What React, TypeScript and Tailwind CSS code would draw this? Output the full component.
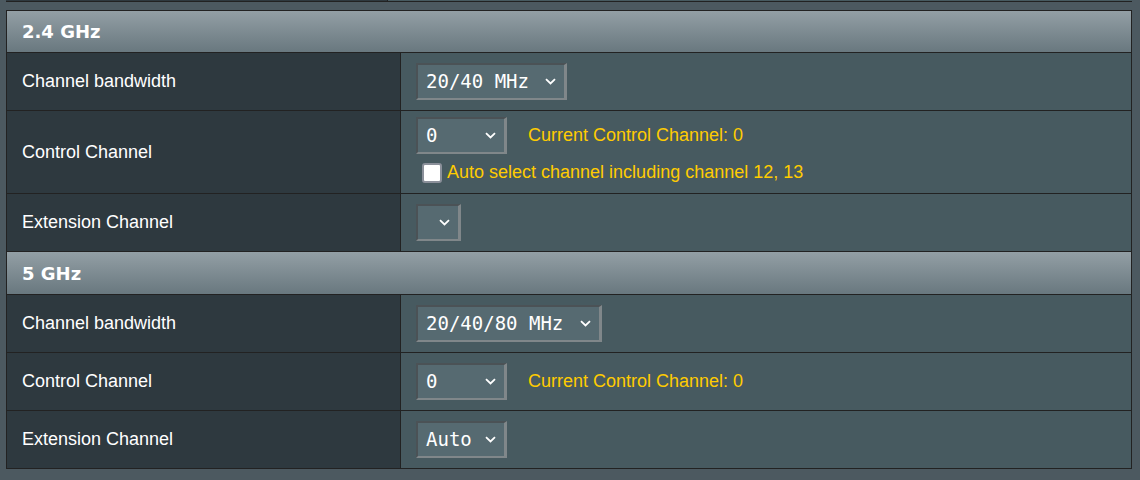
import React from "react";

const sans = { fontFamily: '"Liberation Sans", Arial, sans-serif' };
const mono = { fontFamily: '"DejaVu Sans Mono", "Liberation Mono", monospace' };
const head = { fontFamily: '"DejaVu Sans", Verdana, sans-serif' };

function Chevron() {
  return (
    <svg width="11" height="7" viewBox="0 0 11 7" className="shrink-0">
      <path d="M1 1.2 L5.5 5.5 L10 1.2" fill="none" stroke="#ffffff" strokeWidth="1.8" />
    </svg>
  );
}

function Select({ value, width }: { value: string; width: number }) {
  return (
    <div
      className="flex h-[37px] items-center justify-between bg-[#566a71] border-l-2 border-t-2 border-r-[3px] border-b-2 border-l-[#4b5256] border-t-[#4b5256] border-r-[#80878a] border-b-[#80878a] pl-[8px] pr-[8px] text-[19px] text-white"
      style={{ ...mono, width }}
    >
      <span className="leading-none">{value}</span>
      <Chevron />
    </div>
  );
}

function Header({ title, h }: { title: string; h: string }) {
  return (
    <div
      className={`${h} flex items-center border-b border-[#222] bg-gradient-to-b from-[#939fa5] to-[#69787f] pl-[15px] text-[18px] font-bold text-white`}
      style={head}
    >
      {title}
    </div>
  );
}

function Row({
  label,
  h,
  children,
}: {
  label: string;
  h: string;
  children: React.ReactNode;
}) {
  return (
    <div className={`${h} flex border-b border-[#222]`}>
      <div
        className="flex w-[394px] shrink-0 items-center border-r border-[#222] bg-[#2e393f] pl-[15px] text-[18px] text-white"
        style={sans}
      >
        {label}
      </div>
      <div className="flex flex-1 bg-[#475a60] pl-[15px]">{children}</div>
    </div>
  );
}

function CurrentChannel() {
  return (
    <span className="ml-[21px] text-[18px] text-[#ffcc00]" style={sans}>
      Current Control Channel: 0
    </span>
  );
}

export default function App() {
  return (
    <div className="min-h-[480px] w-full bg-[#4c5960]">
      {/* tail of the table above */}
      <div className="ml-[6px] flex h-[2px] w-[1126px] border-b border-[#222]">
        <div className="w-[382px] border-r border-[#222] bg-[#2f393f]" />
        <div className="flex-1 bg-[#475a60]" />
      </div>

      <div className="ml-[6px] mt-[8px] w-[1126px] border-x border-t border-[#222]">
        <Header title="2.4 GHz" h="h-[42px]" />
        <Row label="Channel bandwidth" h="h-[58px]">
          <div className="flex items-center">
            <Select value="20/40 MHz" width={151} />
          </div>
        </Row>
        <Row label="Control Channel" h="h-[83px]">
          <div className="flex flex-col pt-[6px]">
            <div className="flex items-center">
              <Select value="0" width={91} />
              <CurrentChannel />
            </div>
            <label className="ml-[6px] mt-[5px] flex items-center" style={sans}>
              <span className="h-[20px] w-[20px] rounded-[3px] border-2 border-[#8b909a] bg-white" />
              <span className="ml-[5px] text-[18px] text-[#ffcc00]">
                Auto select channel including channel 12, 13
              </span>
            </label>
          </div>
        </Row>
        <Row label="Extension Channel" h="h-[58px]">
          <div className="flex items-center">
            <Select value="" width={45} />
          </div>
        </Row>

        <Header title="5 GHz" h="h-[43px]" />
        <Row label="Channel bandwidth" h="h-[58px]">
          <div className="flex items-center">
            <Select value="20/40/80 MHz" width={186} />
          </div>
        </Row>
        <Row label="Control Channel" h="h-[58px]">
          <div className="flex items-center">
            <Select value="0" width={91} />
            <CurrentChannel />
          </div>
        </Row>
        <Row label="Extension Channel" h="h-[58px]">
          <div className="flex items-center">
            <Select value="Auto" width={91} />
          </div>
        </Row>
      </div>
    </div>
  );
}
